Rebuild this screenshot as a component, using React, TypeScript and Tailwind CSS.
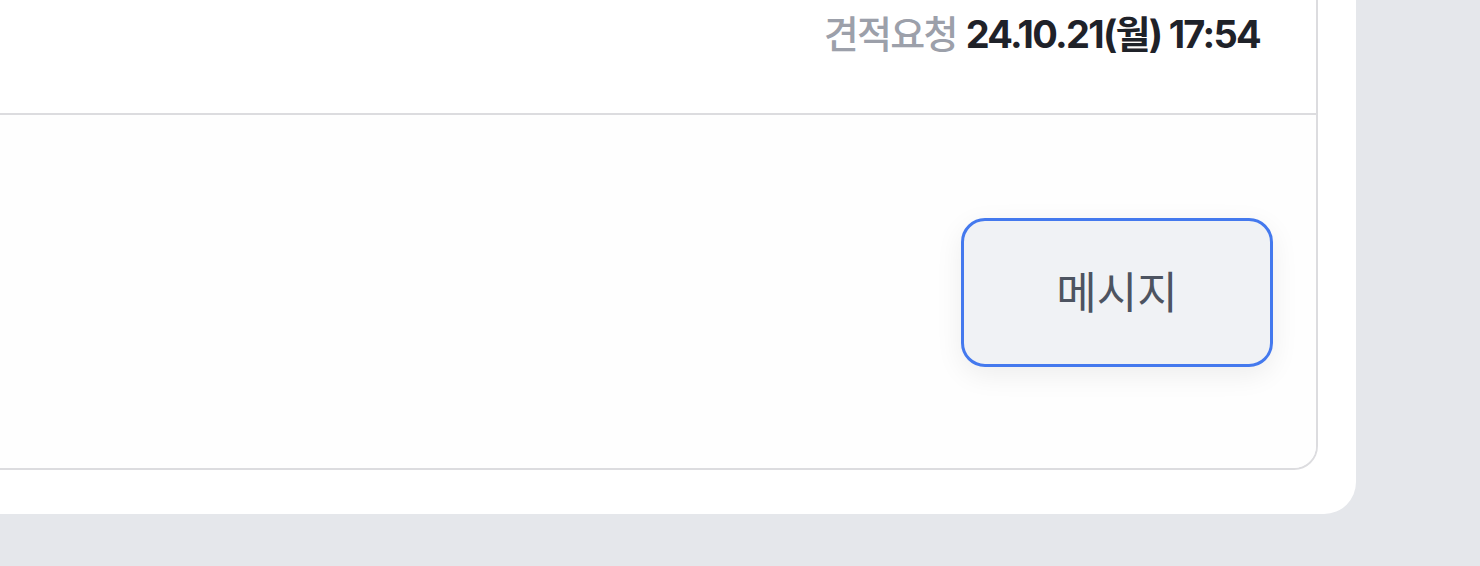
export default function App() {
  return (
    <div
      className="w-full h-[566px] bg-[#e5e7eb] overflow-hidden"
      style={{ fontFamily: "Inter, 'Noto Sans CJK KR', sans-serif" }}
    >
      <div className="w-[1356px] h-[514px] bg-white rounded-br-[32px] pr-[38px] pb-[44px]">
        <div className="h-full flex flex-col border-r-2 border-b-2 border-[#dcdcdf] rounded-br-[24px]">
          <div className="h-[113px] flex justify-end items-start pt-[11px] pr-[56px] shrink-0">
            <p className="text-[38px] leading-[46px] tracking-[-0.045em]">
              <span className="text-[#9ca0aa] font-medium">견적요청</span>{" "}
              <span className="text-[#1f2229] font-bold">24.10.21(월) 17:54</span>
            </p>
          </div>
          <div className="h-[2px] bg-[#dcdcdf] shrink-0" />
          <div className="flex-1 bg-[#fefefe] rounded-br-[22px] flex justify-end items-start pt-[103px] pr-[43px]">
            <button className="w-[312px] h-[149px] rounded-[24px] border-[3px] border-[#4479ee] bg-[#f0f2f5] text-[44px] text-[#4d5461] shadow-[0_8px_28px_rgba(0,0,0,0.07)]">
              메시지
            </button>
          </div>
        </div>
      </div>
    </div>
  )
}
